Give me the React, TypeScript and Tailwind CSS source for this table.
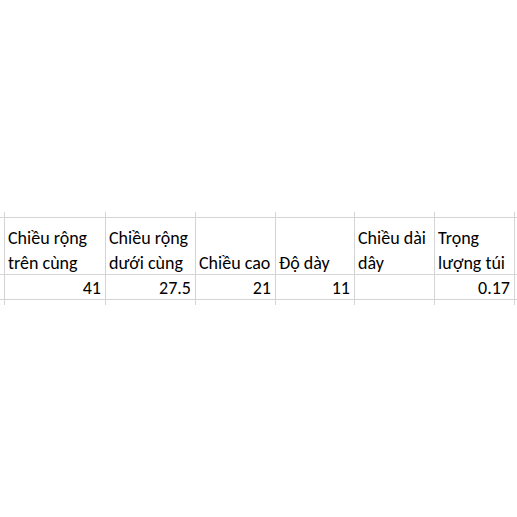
import React from "react";

const font = { fontFamily: '"Carlito", "Lato", "Open Sans", sans-serif' };

export default function App() {
  const headers: string[][] = [
    ["Chiều rộng", "trên cùng"],
    ["Chiều rộng", "dưới cùng"],
    ["Chiều cao"],
    ["Độ dày"],
    ["Chiều dài", "dây"],
    ["Trọng", "lượng túi"],
  ];
  const values = ["41", "27.5", "21", "11", "", "0.17"];
  const cols = "grid grid-cols-[5px_101px_90px_80px_79px_80px_80px_2px]";
  const line = "border-r border-[#d4d4d4]";
  return (
    <div className="w-[517px] h-[517px] bg-white overflow-hidden text-black" style={font}>
      <div className="mt-[212px]">
        <div className={`${cols} h-[6px] border-b border-[#d4d4d4]`}>
          {Array.from({ length: 8 }).map((_, i) => (
            <div key={i} className={i < 7 ? line : ""} />
          ))}
        </div>
        <div className={`${cols} h-[57px] border-b border-[#d4d4d4]`}>
          <div className={line} />
          {headers.map((h, i) => (
            <div key={i} className={`${line} flex flex-col justify-end pl-[3px] text-[18px] leading-[25px] whitespace-nowrap overflow-hidden`}>
              <div className="translate-y-[2px]">
                {h.map((t, j) => (
                  <div key={j}>{t}</div>
                ))}
              </div>
            </div>
          ))}
          <div />
        </div>
        <div className={`${cols} h-[25px] border-b border-[#d4d4d4]`}>
          <div className={line} />
          {values.map((v, i) => (
            <div key={i} className={`${line} text-right pr-[4px] text-[18px] leading-[26px]`}>
              {v}
            </div>
          ))}
          <div />
        </div>
        <div className={`${cols} h-[5px]`}>
          {Array.from({ length: 8 }).map((_, i) => (
            <div key={i} className={i < 7 ? line : ""} />
          ))}
        </div>
      </div>
    </div>
  );
}
